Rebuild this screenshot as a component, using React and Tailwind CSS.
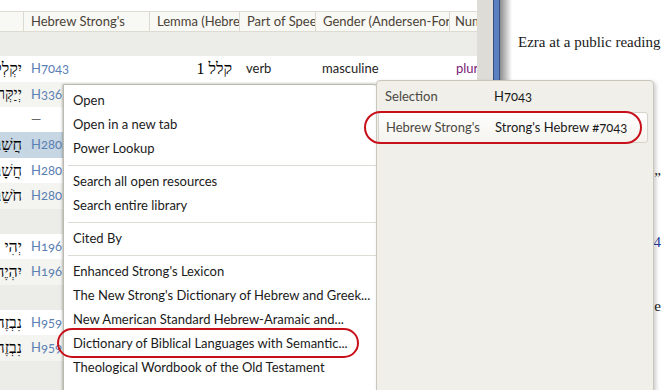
const cols = ['w-[24px]', 'w-[126px]', 'w-[90px]', 'w-[76px]', 'w-[134px]', 'w-[27px]'];

const rows = [
  { band: true, h: 'h-[25px]' },
  { bg: 'bg-white', heb: 'יִקְלְלוּ', sn: 'H7043', lemma: 'קלל 1', pos: 'verb', gen: 'masculine', num: 'plural' },
  { bg: 'bg-[#f4f4f1]', heb: 'יְיַקְּרוּ', sn: 'H3365' },
  { bg: 'bg-white', heb: '', sn: '—', dash: true },
  { bg: 'bg-[#c6d6e3]', heb: 'חֲשַׁבְתֶּם', sn: 'H2803' },
  { bg: 'bg-white', heb: 'חֲשָׁבָהּ', sn: 'H2803' },
  { bg: 'bg-[#f4f4f1]', heb: 'חֹשֵׁב', sn: 'H2803' },
  { band: true, h: 'h-[26px]' },
  { bg: 'bg-white', heb: 'יְהִי', sn: 'H1961' },
  { bg: 'bg-[#f4f4f1]', heb: 'יִהְיֶה', sn: 'H1961' },
  { band: true, h: 'h-[26px]' },
  { bg: 'bg-white', heb: 'נִבְזֶה', sn: 'H959' },
  { bg: 'bg-[#f4f4f1]', heb: 'נִבְזֶה', sn: 'H959' },
  { band: true, h: 'h-[30px]' },
];

const menu = [
  'Open',
  'Open in a new tab',
  'Power Lookup',
  '-',
  'Search all open resources',
  'Search entire library',
  '-',
  'Cited By',
  '-',
  "Enhanced Strong's Lexicon",
  "The New Strong's Dictionary of Hebrew and Greek...",
  'New American Standard Hebrew-Aramaic and...',
  'Dictionary of Biblical Languages with Semantic...',
  'Theological Wordbook of the Old Testament',
];

function Table() {
  const heads = ['', "Hebrew Strong's", 'Lemma (Hebrew)', 'Part of Speech', 'Gender (Andersen-Forbes)', 'Num'];
  return (
    <div className="w-[477px] shrink-0 flex flex-col pt-[11px] overflow-hidden">
      {/* header */}
      <div className="flex h-[21px] border-y border-[#dedbd2] bg-[#f8f8f5] text-[#4b4336] text-[13px] leading-[19px]">
        {heads.map((h, i) => (
          <div
            key={i}
            className={`${cols[i]} shrink-0 overflow-hidden whitespace-nowrap ${i < 5 ? 'px-[7px] border-r border-[#dcd9d0]' : 'pl-[5px]'}`}
          >
            {h}
          </div>
        ))}
      </div>
      {rows.map((r, i) =>
        r.band ? (
          <div key={i} className={`${r.h} bg-[#ececE8]`} />
        ) : (
          <div key={i} className={`flex h-[26px] items-center ${r.bg} text-[13px]`}>
            <div dir="rtl" className="w-[24px] shrink-0 overflow-hidden whitespace-nowrap pr-[2px] text-[16px] text-black font-['Liberation_Serif','DejaVu_Serif',serif]">
              {r.heb}
            </div>
            <div className={`w-[126px] shrink-0 px-[7px] whitespace-nowrap ${r.dash ? 'text-[#666]' : 'text-[#5b80b2]'}`}>
              {r.sn}
            </div>
            <div dir="rtl" className="w-[90px] shrink-0 px-[8px] whitespace-nowrap text-[16px] text-black font-['Liberation_Serif','DejaVu_Serif',serif]">
              {r.lemma}
            </div>
            <div className="w-[76px] shrink-0 px-[6px] text-[#222]">{r.pos}</div>
            <div className="w-[134px] shrink-0 px-[6px] text-[#222]">{r.gen}</div>
            <div className="w-[27px] shrink-0 overflow-hidden whitespace-nowrap pl-[6px] text-[#7b2277]">{r.num}</div>
          </div>
        )
      )}
    </div>
  );
}

function ContextMenu() {
  return (
    <div className="absolute left-[63px] top-[84px] w-[315px] h-[320px] bg-white border border-[#bcb9af] rounded-tr-[4px] shadow-[-1px_0_2px_rgba(0,0,0,0.15),1px_2px_4px_rgba(0,0,0,0.25)] pt-[4px] text-[13px] text-[#1a1a1a]">
      {menu.map((m, i) =>
        m === '-' ? (
          <div key={i} className="h-[9px] flex items-center pl-[4px]">
            <div className="h-px w-full bg-[#dddbd3]" />
          </div>
        ) : (
          <div key={i} className="h-[24px] flex items-center pl-[9px] whitespace-nowrap">
            {m}
          </div>
        )
      )}
    </div>
  );
}

function SidePanel() {
  return (
    <div className="absolute left-[376px] top-[80px] w-[278px] h-[320px] bg-[#f0efe9] border border-[#c9c6bc] rounded-t-[4px] shadow-[2px_2px_4px_rgba(0,0,0,0.2)] text-[13px]">
      <div className="flex h-[31px] items-center pl-[8px]">
        <span className="w-[109px] text-[#4a4842]">Selection</span>
        <span className="text-[#1a1a1a]">H7043</span>
      </div>
      <div className="ml-px mr-[5px] h-[31px] flex items-center pl-[7px] rounded-[3px] border border-[#d6d3ca] bg-linear-to-b from-white to-[#f4f3ee]">
        <span className="w-[109px] text-[#4a4842]">Hebrew Strong's</span>
        <span className="text-[#1a1a1a]">Strong's Hebrew #7043</span>
      </div>
    </div>
  );
}

export default function App() {
  return (
    <div className="relative w-[664px] h-[390px] overflow-hidden bg-white flex font-[Lato,'Liberation_Sans',sans-serif] oldstyle-nums">
      <Table />
      <div className="w-[16px] shrink-0 bg-[#dedcd6]" />
      <div className="w-[7px] shrink-0 bg-[#5d80c0] border-x border-[#34507e]" />
      <div className="w-[12px] shrink-0 bg-linear-to-r from-[#8e8e8e] to-white" />
      <div className="flex-1 min-w-0 pt-[33px] pl-[6px] overflow-hidden font-['Liberation_Serif','DejaVu_Serif',serif] text-[15px] text-[#1a1a1a]">
        <div className="h-[18px] leading-[18px] whitespace-nowrap">Ezra at a public reading</div>
        <div className="mt-[118px] h-[18px] leading-[18px] whitespace-nowrap text-right pr-[3px]">the people,”</div>
        <div className="mt-[46px] h-[18px] leading-[18px] whitespace-nowrap text-right pr-[3px] text-[#2a3a9a]">Neh 8:4</div>
        <div className="mt-[46px] h-[18px] leading-[18px] whitespace-nowrap text-right pr-[3px]">the</div>
      </div>

      <ContextMenu />
      <SidePanel />

      {/* annotations */}
      <div className="absolute left-[364px] top-[111px] w-[278px] h-[33px] rounded-full border-2 border-[#c8101a]" />
      <div className="absolute left-[57px] top-[328px] w-[302px] h-[30px] rounded-full border-2 border-[#c8101a]" />
    </div>
  );
}
